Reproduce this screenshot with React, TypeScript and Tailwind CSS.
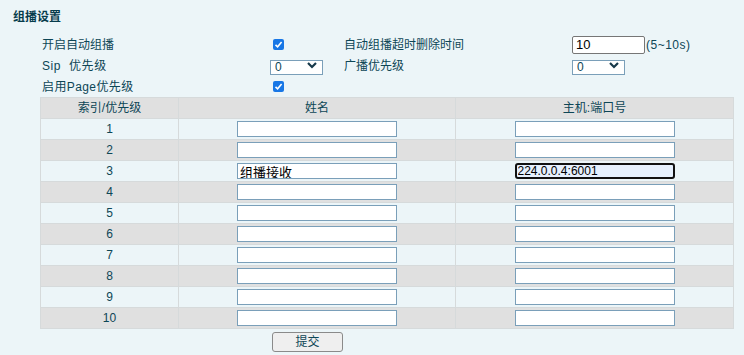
import React from 'react';

const ink = 'text-[#0d4656]';

const rows = [
  { id: 1, name: '', host: '' },
  { id: 2, name: '', host: '' },
  { id: 3, name: '组播接收', host: '224.0.0.4:6001' },
  { id: 4, name: '', host: '' },
  { id: 5, name: '', host: '' },
  { id: 6, name: '', host: '' },
  { id: 7, name: '', host: '' },
  { id: 8, name: '', host: '' },
  { id: 9, name: '', host: '' },
  { id: 10, name: '', host: '' },
];

const Check: React.FC = () => (
  <span className="ml-[3px] flex h-[11px] w-[11px] items-center justify-center rounded-[2px] bg-[#1877e6]">
    <svg width="9" height="9" viewBox="0 0 9 9">
      <path d="M1.5 4.8 L3.6 6.8 L7.6 2" fill="none" stroke="#fff" strokeWidth="1.6" />
    </svg>
  </span>
);

const Select: React.FC = () => (
  <div className="relative h-[15px] w-[53px]">
    <select
      defaultValue="0"
      className={`h-[15px] w-[53px] appearance-none border border-[#7a9fb9] bg-white pl-[4px] text-[12px] leading-[13px] ${ink} outline-none`}
    >
      <option value="0">0</option>
      <option value="1">1</option>
    </select>
    <svg className="pointer-events-none absolute right-[6px] top-[4px]" width="10" height="7" viewBox="0 0 10 7">
      <path d="M1 1 L5 5 L9 1" fill="none" stroke="#17394a" strokeWidth="2.2" />
    </svg>
  </div>
);

const App: React.FC = () => {
  return (
    <div
      className={`h-[355px] w-[744px] overflow-hidden bg-[#ecf5f8] ${ink}`}
      style={{ fontFamily: '"Liberation Sans", "Noto Sans CJK SC", sans-serif' }}
    >
      {/* Title */}
      <div className="pl-[13px] pt-[10px] text-[12px] font-bold leading-[14px] text-[#073c4c]">组播设置</div>

      {/* Settings */}
      <div className="mt-[10px] grid grid-cols-[228px_74px_228px_1fr] pl-[42px] text-[12px]">
        <div className="flex h-[21px] items-center">开启自动组播</div>
        <div className="flex h-[21px] items-center">
          <Check />
        </div>
        <div className="flex h-[21px] items-center">自动组播超时删除时间</div>
        <div className="flex h-[21px] items-center">
          <input
            defaultValue="10"
            className="h-[18px] w-[73px] rounded-[2px] border border-[#767676] bg-white px-[3px] text-[13px] text-black outline-none"
          />
          <span className="ml-[1px] tracking-[0.5px]">(5~10s)</span>
        </div>

        <div className="flex h-[21px] items-center tracking-[0.6px]">Sip&nbsp; 优先级</div>
        <div className="flex h-[21px] items-center">
          <Select />
        </div>
        <div className="flex h-[21px] items-center">广播优先级</div>
        <div className="flex h-[21px] items-center">
          <Select />
        </div>

        <div className="flex h-[21px] items-center tracking-[0.4px]">启用Page优先级</div>
        <div className="flex h-[21px] items-center">
          <Check />
        </div>
        <div />
        <div />
      </div>

      {/* Table */}
      <table className="ml-[40px] w-[693px] table-fixed border-collapse text-[12px]">
        <colgroup>
          <col className="w-[138px]" />
          <col className="w-[277px]" />
          <col className="w-[278px]" />
        </colgroup>
        <thead>
          <tr className="h-[21px] bg-[#e0e0e0]">
            <th className="border border-[#d6dadb] p-0 text-center font-normal">索引/优先级</th>
            <th className="border border-[#d6dadb] p-0 text-center font-normal">姓名</th>
            <th className="border border-[#d6dadb] p-0 text-center font-normal">主机:端口号</th>
          </tr>
        </thead>
        <tbody>
          {rows.map((r, i) => (
            <tr key={r.id} className={`h-[21px] ${i % 2 === 0 ? 'bg-[#ecf5f8]' : 'bg-[#e0e0e0]'}`}>
              <td className="border border-[#d6dadb] p-0 text-center">{r.id}</td>
              <td className="border border-[#d6dadb] p-0">
                <div className="flex justify-center">
                  <input
                    defaultValue={r.name}
                    className="h-[16px] w-[160px] border border-[#7a9fb9] bg-white px-[2px] text-[13px] leading-[14px] text-black outline-none"
                  />
                </div>
              </td>
              <td className="border border-[#d6dadb] p-0">
                <div className="flex justify-center">
                  {r.id === 3 ? (
                    <input
                      defaultValue={r.host}
                      className="h-[16px] w-[160px] rounded-[3px] border-2 border-[#111] bg-[#e6f0fd] px-[1px] text-[12px] leading-[12px] text-black outline-none"
                    />
                  ) : (
                    <input
                      defaultValue={r.host}
                      className="h-[16px] w-[160px] border border-[#7a9fb9] bg-white px-[2px] text-[12px] text-black outline-none"
                    />
                  )}
                </div>
              </td>
            </tr>
          ))}
        </tbody>
      </table>

      {/* Submit */}
      <button className="ml-[272px] mt-[2px] h-[20px] w-[71px] rounded-[3px] border border-[#8a8a8a] bg-[#efefef] text-[12px] leading-[18px]">
        提交
      </button>
    </div>
  );
};

export default App;
